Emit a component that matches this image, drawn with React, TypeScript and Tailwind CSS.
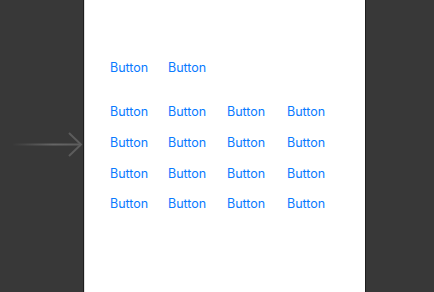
import React from 'react';

const cols = ['w-[58px]', 'w-[59px]', 'w-[60px]', 'w-[60px]'];

const Btn = ({ w }: { w: string }) => (
  <div className={`${w} text-[12.5px] leading-[16px] text-[#0a7aff]`}>Button</div>
);

export default function App() {
  return (
    <div className="flex h-[292px] w-[434px] bg-[#383838] font-['Inter',sans-serif]">
      {/* entry arrow */}
      <div className="flex w-[83px] flex-col pt-[132px] pl-[12px]">
        <svg width="71" height="25" viewBox="0 0 71 25">
          <defs>
            <linearGradient id="fade" gradientUnits="userSpaceOnUse" x1="0" y1="0" x2="69" y2="0">
              <stop offset="0" stopColor="#666666" stopOpacity="0" />
              <stop offset="0.6" stopColor="#666666" stopOpacity="1" />
              <stop offset="1" stopColor="#5c5c5c" stopOpacity="1" />
            </linearGradient>
          </defs>
          <rect x="0" y="11.5" width="69" height="2" fill="url(#fade)" />
          <polyline points="57,1 69,12.5 57,24" fill="none" stroke="#5c5c5c" strokeWidth="2" />
        </svg>
      </div>

      {/* scene */}
      <div className="flex w-[283px] border-l border-r border-[#1e1e1e]">
        <div className="w-px bg-[#dedede]" />
        <div className="flex-1 bg-white pl-[25px]">
          <div className="flex pt-[60px]">
            <Btn w={cols[0]} />
            <Btn w={cols[1]} />
          </div>
          <div className="pt-[28px]">
            {['h-[31px]', 'h-[31px]', 'h-[30px]', 'h-[30px]'].map((h, r) => (
              <div key={r} className={`flex ${h}`}>
                {cols.map((w, c) => (
                  <Btn key={c} w={w} />
                ))}
              </div>
            ))}
          </div>
        </div>
      </div>

      <div className="flex-1" />
    </div>
  );
}
